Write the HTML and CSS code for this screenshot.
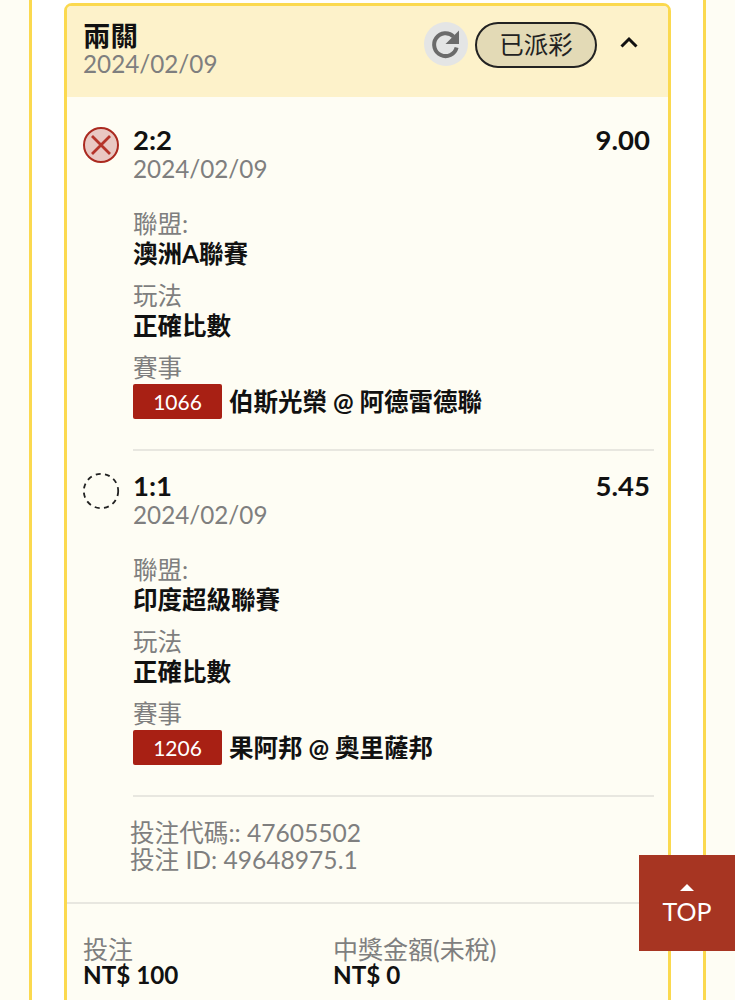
FILE: index.html
```html
<!DOCTYPE html>
<html lang="zh-Hant">
<head>
  <meta charset="UTF-8" />
  <meta name="viewport" content="width=device-width, initial-scale=1" />
  <title>兩關</title>
  <link rel="stylesheet" href="styles.css">
</head>
<body>
  <div class="panel">
    <div class="card">
      <div class="card-head">
        <div class="head-text">
          <div class="head-title">兩關</div>
          <div class="date">2024/02/09</div>
        </div>
        <div class="head-actions">
          <button class="refresh" type="button" aria-label="refresh">
            <svg width="44" height="44" viewBox="0 0 44 44">
              <path d="M32.6 25.5a11.4 11.4 0 1 1-3-10.9" fill="none" stroke="#6b6b6b" stroke-width="4" />
              <path d="M35 8.5v13.5h-13.5z" fill="#6b6b6b" />
            </svg>
          </button>
          <span class="status">已派彩</span>
          <svg class="chevron" width="20" height="14" viewBox="0 0 20 14">
            <path d="M2.5 11.5L10 4l7.5 7.5" fill="none" stroke="#111" stroke-width="3" />
          </svg>
        </div>
      </div>

      <div class="leg">
        <div class="leg-icon">
          <svg width="38" height="38" viewBox="0 0 38 38">
            <circle cx="19" cy="19" r="17" fill="#e9c8c3" stroke="#ab2a20" stroke-width="2" />
            <path d="M10 10l18 18M28 10L10 28" stroke="#b5342a" stroke-width="2.8" />
          </svg>
        </div>
        <div class="leg-main">
          <div class="leg-top">
            <div>
              <div class="score">2:2</div>
              <div class="date">2024/02/09</div>
            </div>
            <div class="odds">9.00</div>
          </div>
          <div class="field">
            <div class="label">聯盟:</div>
            <div class="value">澳洲A聯賽</div>
          </div>
          <div class="field">
            <div class="label">玩法</div>
            <div class="value">正確比數</div>
          </div>
          <div class="field">
            <div class="label">賽事</div>
            <div class="match"><span class="badge">1066</span><span class="value">伯斯光榮 @ 阿德雷德聯</span></div>
          </div>
        </div>
      </div>

      <div class="leg">
        <div class="leg-icon">
          <svg width="38" height="38" viewBox="0 0 38 38">
            <circle cx="19" cy="19" r="17.2" fill="none" stroke="#222" stroke-width="1.8" stroke-dasharray="5 4.4" />
          </svg>
        </div>
        <div class="leg-main">
          <div class="leg-top">
            <div>
              <div class="score">1:1</div>
              <div class="date">2024/02/09</div>
            </div>
            <div class="odds">5.45</div>
          </div>
          <div class="field">
            <div class="label">聯盟:</div>
            <div class="value">印度超級聯賽</div>
          </div>
          <div class="field">
            <div class="label">玩法</div>
            <div class="value">正確比數</div>
          </div>
          <div class="field">
            <div class="label">賽事</div>
            <div class="match"><span class="badge">1206</span><span class="value">果阿邦 @ 奧里薩邦</span></div>
          </div>
        </div>
      </div>

      <div class="codes">
        <div>投注代碼:: 47605502</div>
        <div>投注 ID: 49648975.1</div>
      </div>

      <div class="card-foot">
        <div class="foot-col">
          <div class="foot-label">投注</div>
          <div class="foot-value">NT$ 100</div>
        </div>
        <div class="foot-col">
          <div class="foot-label">中獎金額(未稅)</div>
          <div class="foot-value">NT$ 0</div>
        </div>
      </div>
    </div>
  </div>

  <a class="to-top" href="#">
    <span class="to-top-arrow"></span>
    <span>TOP</span>
  </a>
</body>
</html>
```

FILE: styles.css
```css
html, body {
  height: 1000px;
  overflow: hidden;
}
body {
  margin: 0;
  background-color: #fefdf4;
  color: #111;
  font-family: Lato, "Noto Sans CJK TC", sans-serif;
}
.panel {
  box-sizing: border-box;
  width: 677px;
  height: 1000px;
  margin-left: 29px;
  padding: 3px 32px 0;
  background: #fff;
  border-left: 3px solid #fbd94f;
  border-right: 3px solid #fbd94f;
}
.card {
  width: 607px;
  height: 1100px;
  box-sizing: border-box;
  background: #fefdf4;
  border: 3.5px solid #fbd94f;
  border-radius: 8px;
}
.card-head {
  display: flex;
  justify-content: space-between;
  height: 91px;
  padding-left: 16px;
  padding-right: 29px;
  background: #fdf2ca;
  border-radius: 4px 4px 0 0;
}
.head-text {
  padding-top: 15px;
}
.head-title {
  font-size: 27.5px;
  font-weight: 700;
  line-height: 29px;
}
.date {
  color: #7f7f7f;
  font-size: 24.25px;
  line-height: 28px;
}
.head-actions {
  display: flex;
  align-items: flex-start;
  padding-top: 16px;
}
.refresh {
  width: 44px;
  height: 44px;
  padding: 0;
  margin-right: 7px;
  border: none;
  border-radius: 50%;
  background: #e4e5e5;
}
.refresh svg {
  display: block;
}
.status {
  box-sizing: border-box;
  width: 122px;
  height: 46px;
  border: 2px solid #222;
  border-radius: 23px;
  background: #e3dab6;
  color: #222;
  font-size: 24.5px;
  line-height: 42px;
  text-align: center;
}
.chevron {
  margin-top: 13px;
  margin-left: 22px;
}
.leg {
  display: flex;
  height: 346px;
  box-sizing: border-box;
  padding-top: 28px;
  padding-left: 15px;
}
.leg-icon {
  width: 51px;
  flex: none;
}
.leg-icon svg {
  display: block;
  margin-top: 1px;
}
.leg-main {
  width: 521px;
  height: 326px;
  box-sizing: border-box;
  border-bottom: 2px solid #e8e7e0;
}
.leg-top {
  display: flex;
  justify-content: space-between;
  padding-right: 4px;
  margin-bottom: 26px;
}
.score, .odds {
  font-size: 27.5px;
  font-weight: 700;
  line-height: 30px;
}
.field {
  margin-top: 12px;
}
.label {
  color: #7f7f7f;
  font-size: 24.5px;
  line-height: 30px;
}
.value {
  font-size: 24.5px;
  font-weight: 700;
  line-height: 30px;
}
.match {
  display: flex;
  align-items: center;
  gap: 7px;
  margin-top: 1px;
}
.badge {
  width: 89px;
  height: 35px;
  border-radius: 2px;
  background: #a82014;
  color: #fff;
  font-size: 21px;
  line-height: 35px;
  text-align: center;
}
.codes {
  height: 83px;
  padding-top: 30px;
  padding-left: 63px;
  color: #7f7f7f;
  font-size: 24.6px;
  line-height: 27px;
}
.card-foot {
  display: flex;
  padding: 32px 16px 0;
  border-top: 2px solid #e8e7e0;
}
.foot-col {
  width: 250px;
}
.foot-label {
  color: #7f7f7f;
  font-size: 25px;
  line-height: 26px;
}
.foot-value {
  font-size: 24.25px;
  font-weight: 700;
  line-height: 26px;
}
.to-top {
  position: fixed;
  left: 639px;
  top: 855px;
  display: flex;
  flex-direction: column;
  align-items: center;
  box-sizing: border-box;
  width: 96px;
  height: 96px;
  padding-top: 29px;
  background: #a73522;
  color: #fff;
  font-size: 25px;
  line-height: 30px;
  text-decoration: none;
}
.to-top-arrow {
  width: 0;
  height: 0;
  margin-bottom: 5px;
  border-left: 7px solid transparent;
  border-right: 7px solid transparent;
  border-bottom: 7px solid #fff;
}
```
